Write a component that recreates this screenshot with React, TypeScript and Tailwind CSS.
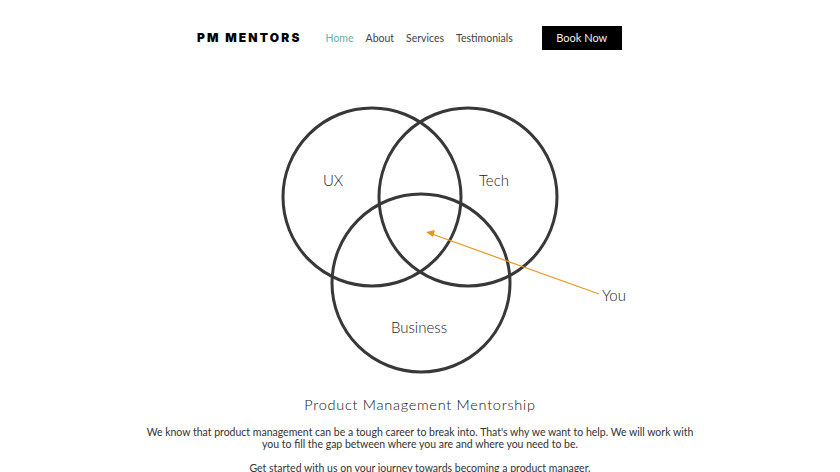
import React from 'react';

const navLinks = ['Home', 'About', 'Services', 'Testimonials'];

const Venn: React.FC = () => (
  <svg width="420" height="290" viewBox="0 0 420 290" className="block">
    <g fill="none" stroke="#383838" strokeWidth="3">
      <circle cx="162" cy="102" r="89" />
      <circle cx="258" cy="102" r="89" />
      <circle cx="211" cy="188" r="89" />
    </g>
    <line x1="389" y1="199" x2="222" y2="139" stroke="#e8961e" strokeWidth="1.2" />
    <polygon points="216,137 225,135 223,142" fill="#e8961e" />
    <g fill="#222" fontSize="15" fontWeight="300" style={{ fontFamily: 'Lato, "Open Sans", sans-serif' }}>
      <text x="123" y="91" textAnchor="middle">UX</text>
      <text x="284" y="91" textAnchor="middle">Tech</text>
      <text x="209" y="238" textAnchor="middle">Business</text>
      <text x="392" y="206">You</text>
    </g>
  </svg>
);

const App: React.FC = () => {
  return (
    <div className="w-[840px] h-[472px] overflow-hidden bg-white text-[#333]" style={{ fontFamily: 'Lato, "Open Sans", sans-serif' }}>
      {/* Header */}
      <header className="h-[76px] flex items-center pl-[197px]">
        <div className="text-[12px] font-black tracking-[0.18em] text-black" style={{ fontFamily: 'Inter, sans-serif' }}>
          PM MENTORS
        </div>
        <nav className="flex items-center gap-[12px] ml-[24px] text-[10.5px] pt-[1px]">
          {navLinks.map((link, i) => (
            <span key={link} className={i === 0 ? 'text-[#5fb3a6]' : 'text-[#444]'}>{link}</span>
          ))}
        </nav>
        <button className="ml-[29px] w-[80px] h-[24px] bg-black text-[#eee] text-[11px]">
          Book Now
        </button>
      </header>

      {/* Diagram */}
      <div className="flex justify-center mt-[19px]">
        <Venn />
      </div>

      {/* Intro */}
      <section className="text-center mt-[10px]">
        <h1 className="text-[14.5px] leading-[20px] tracking-[0.05em] text-[#111] font-light">Product Management Mentorship</h1>
        <p className="mt-[11px] text-[10.5px] leading-[12px] w-[550px] mx-auto text-[#333]">
          We know that product management can be a tough career to break into. That's why we want to help. We will work with you to fill the gap between where you are and where you need to be.
        </p>
        <p className="mt-[12px] text-[10.5px] leading-[12px] text-[#333]">
          Get started with us on your journey towards becoming a product manager.
        </p>
      </section>
    </div>
  );
};

export default App;
